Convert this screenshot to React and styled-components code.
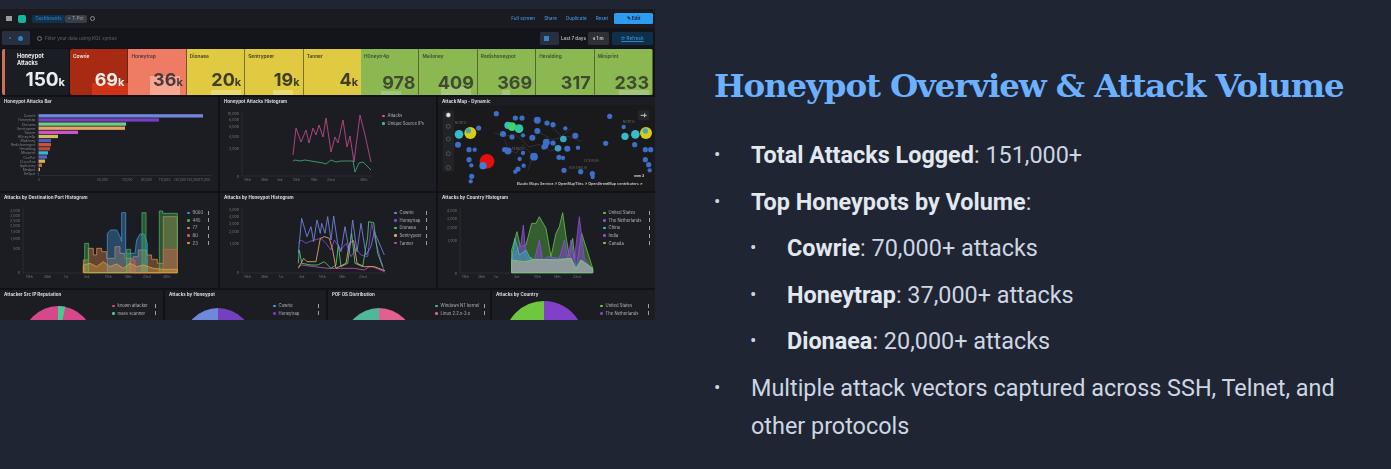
import React from 'react'
import styled, { createGlobalStyle } from 'styled-components'

const GlobalStyle = createGlobalStyle`
  html, body { margin: 0; padding: 0; background: #1f2532; }
  * { box-sizing: border-box; }
`

const arc = (cx, cy, r, a0, a1) => {
  const p = a => [cx + r * Math.sin(a * Math.PI / 180), cy - r * Math.cos(a * Math.PI / 180)]
  const [x0, y0] = p(a0)
  const [x1, y1] = p(a1)
  return `M${cx} ${cy}L${x0} ${y0}A${r} ${r} 0 ${a1 - a0 > 180 ? 1 : 0} 1 ${x1} ${y1}Z`
}
const pts = list => list.map(p => p.join(',')).join(' ')

const tiles = [
  { name: 'Cowrie', value: '69', unit: 'k', bg: '#a92a12', fg: '#f4ede8', hump: { left: 22, width: 36, height: 12, color: '#cf3515' } },
  { name: 'Honeytrap', value: '36', unit: 'k', bg: '#ee7b63', fg: '#4a3a36', hump: { left: 22, width: 30, height: 19, color: '#f6a794' } },
  { name: 'Dionaea', value: '20', unit: 'k', bg: '#e0ca42', fg: '#3f3d22', hump: { left: 24, width: 30, height: 5, color: '#e9da74' } },
  { name: 'Sentrypeer', value: '19', unit: 'k', bg: '#e0ca42', fg: '#3f3d22', hump: { left: 28, width: 20, height: 5, color: '#e9da74' } },
  { name: 'Tanner', value: '4', unit: 'k', bg: '#e0ca42', fg: '#3f3d22', noLine: true },
  { name: 'H0neytr4p', value: '978', bg: '#8cb851', fg: '#3f4a32', hump: { left: 20, width: 20, height: 4, color: '#a3c774' } },
  { name: 'Mailoney', value: '409', bg: '#8cb851', fg: '#3f4a32', hump: { left: 22, width: 30, height: 8, color: '#a3c774' } },
  { name: 'Redishoneypot', value: '369', bg: '#8cb851', fg: '#3f4a32', hump: { left: 24, width: 8, height: 5, color: '#a3c774' } },
  { name: 'Heralding', value: '317', bg: '#8cb851', fg: '#3f4a32' },
  { name: 'Miniprint', value: '233', bg: '#8cb851', fg: '#3f4a32', hump: { left: 24, width: 30, height: 5, color: '#a3c774' } },
]

const bars = [
  ['Cowrie', 203, '#7088dc'], ['Honeytrap', 159, '#7440c0'], ['Dionaea', 126, '#6fcc86'], ['Sentrypeer', 125, '#e0a76c'],
  ['Tanner', 78, '#cf55c4'], ['H0neytr4p', 58, '#d3bd5a'], ['Mailoney', 51, '#4a5cc4'], ['Redishoneypot', 51, '#c9553f'],
  ['Heralding', 50, '#b84a44'], ['Miniprint', 48, '#3fb5cc'], ['ConPot', 47, '#4d63d0'], ['CiscoAsa', 45, '#dcb545'],
  ['Ipphoney', 42, '#c0714d'], ['Medpot', 40, '#d3bd5a'], ['Hellpot', 39, '#3f55b0'],
]

const attackLine = [[292, 155], [295, 128], [300, 142], [305, 130], [308, 143], [312, 128], [315, 135], [318, 125], [322, 137], [325, 118], [328, 138], [330, 152], [334, 137], [337, 143], [342, 120], [346, 147], [349, 136], [353, 162], [359, 115], [364, 135], [370, 162]]
const sourceLine = [[292, 161], [294, 160], [299, 161], [304, 160], [310, 161], [316, 162], [322, 163], [325, 164], [330, 160], [335, 162], [340, 161], [348, 161], [352, 161], [354, 172], [358, 163], [362, 162], [370, 170]]

const cowrie = [[52, 160], [62, 55], [78, 110], [90, 80], [98, 125], [108, 60], [118, 100], [122, 70], [132, 100], [140, 50], [150, 120], [158, 48], [170, 130], [180, 155], [192, 80], [205, 155], [215, 60], [228, 155], [240, 70], [255, 165], [270, 140], [280, 95], [310, 165]]
const honeytrap = [[52, 130], [60, 120], [75, 130], [85, 125], [100, 120], [120, 115], [135, 130], [150, 150], [160, 120], [180, 150], [195, 130], [210, 170], [225, 145], [240, 165], [260, 170], [272, 70], [285, 130], [310, 215]]
const dionaea = [[52, 190], [55, 150], [62, 190], [90, 195], [110, 195], [130, 185], [150, 205], [165, 195], [172, 135], [180, 200], [200, 190], [212, 100], [222, 190], [245, 200], [260, 110], [263, 65], [278, 68], [290, 160], [305, 200]]
const sentrypeer = [[52, 205], [68, 175], [78, 185], [105, 185], [118, 115], [130, 110], [145, 115], [155, 150], [165, 205], [195, 190], [205, 130], [218, 122], [228, 190], [250, 200], [280, 200], [312, 212]]
const tanner = [[52, 200], [62, 195], [100, 200], [140, 205], [180, 205], [220, 205], [250, 210], [265, 200], [275, 200], [310, 215]]

const usArea = [[62, 150], [78, 95], [88, 140], [105, 135], [122, 70], [135, 70], [145, 50], [165, 85], [180, 170], [195, 100], [205, 80], [215, 38], [225, 110], [235, 170], [245, 115], [255, 210], [272, 100], [305, 205]]
const nlArea = [[62, 180], [90, 130], [97, 75], [105, 170], [130, 180], [145, 120], [155, 180], [170, 170], [205, 175], [220, 120], [230, 175], [240, 120], [250, 180], [265, 50], [280, 175], [305, 210]]
const cnArea = [[62, 180], [72, 115], [85, 165], [105, 150], [115, 170], [130, 180], [200, 178], [240, 175], [255, 205], [270, 180], [305, 208]]
const grayArea = [[62, 180], [100, 185], [130, 178], [200, 180], [240, 175], [255, 210], [270, 180], [305, 205]]

const portAreas = [
  ['#d8874a', [[40, 218], [40, 180], [55, 180], [55, 145], [70, 145], [70, 165], [80, 165], [80, 145], [95, 145], [95, 155], [110, 155], [110, 175], [135, 175], [135, 140], [150, 140], [150, 160], [165, 160], [165, 175], [190, 175], [190, 170], [205, 170], [205, 150], [230, 150], [230, 165], [245, 165], [245, 178], [262, 178], [262, 190], [280, 190], [280, 50], [322, 50], [322, 218]]],
  ['#3f8fd0', [[112, 218], [112, 100], [122, 90], [140, 90], [150, 110], [155, 125], [155, 38], [167, 38], [167, 160], [195, 160], [200, 120], [210, 102], [222, 102], [232, 130], [232, 218]]],
  ['#45b058', [[44, 218], [44, 130], [56, 130], [56, 218], [170, 218], [170, 148], [182, 148], [182, 218], [216, 218], [216, 38], [228, 38], [228, 218], [268, 218], [268, 33], [278, 33], [278, 40], [322, 40], [322, 218]]],
  ['#d05a50', [[180, 218], [180, 180], [195, 180], [195, 218], [280, 218], [280, 148], [322, 148], [322, 218]]],
  ['#e0a040', [[40, 218], [40, 195], [60, 190], [80, 200], [100, 185], [120, 200], [140, 192], [160, 205], [180, 190], [200, 200], [220, 195], [250, 205], [280, 208], [322, 208], [322, 218]]],
]

const mapDots = [
  [175, 42, 6], [232, 55, 6], [252, 55, 6], [298, 62, 8], [327, 70, 6], [345, 75, 6], [515, 50, 6], [122, 85, 6], [195, 103, 7], [222, 112, 6], [255, 107, 5],
  [298, 94, 7], [283, 114, 7], [345, 130, 6], [412, 108, 7], [382, 86, 5], [325, 128, 8], [322, 138, 7], [318, 142, 6], [388, 147, 7], [420, 144, 5], [503, 131, 6],
  [60, 135, 7], [93, 150, 6], [110, 150, 5], [200, 150, 6], [210, 154, 8], [255, 160, 5], [245, 178, 5], [288, 171, 9], [363, 173, 6], [375, 175, 5],
  [93, 180, 6], [100, 197, 5], [240, 208, 6], [232, 216, 5], [257, 198, 5], [378, 212, 6], [428, 216, 6], [463, 222, 6], [464, 232, 5], [101, 230, 6], [98, 245, 5],
  [622, 150, 6], [638, 150, 6], [622, 180, 6], [632, 195, 6], [635, 212, 5], [557, 82, 5], [590, 135, 6],
]
const mapBig = [
  [147, 185, 22, '#e4100f'], [135, 198, 11, '#3f7fd8'], [97, 100, 18, '#d8cc18'], [91, 93, 8, '#49a8b0'], [63, 104, 13, '#36bccb'],
  [210, 77, 11, '#36bccb'], [222, 81, 13, '#3dd468'], [243, 87, 13, '#2fc4a0'], [376, 118, 10, '#36a8c0'], [360, 146, 10, '#3f9cc8'],
  [561, 110, 11, '#36bccb'], [592, 104, 13, '#36bccb'], [624, 100, 18, '#d8cc18'], [622, 94, 8, '#49a8b0'],
]
const borders = 'M170 100l30 10 30-6 25 20 18 18 30-8 35 20 30-10M200 120l10 30 25 10 20-25M255 135l30 35-15 40M300 95l40 25 50-10 40 15M340 80l30 30 30-25'

const Page = styled.div`
  display: flex;
  width: 1391px;
  height: 469px;
  overflow: hidden;
  background: #1f2532;
`
const Dashboard = styled.div`
  flex: none;
  width: 655px;
  height: 311px;
  margin-top: 9px;
  display: flex;
  flex-direction: column;
  background: #111217;
  overflow: hidden;
  filter: blur(0.6px);
  font-family: Inter, "Liberation Sans", sans-serif;
`
const TopNav = styled.div`
  flex: none;
  height: 19px;
  display: flex;
  align-items: center;
  padding: 0 2px 0 6px;
  background: #191b21;
  font-size: 4.6px;
`
const MenuIcon = styled.span`
  width: 6px;
  height: 5px;
  background: #9a9ca3;
  margin-right: 6px;
`
const LogoTile = styled.span`
  width: 8px;
  height: 8px;
  border-radius: 2px;
  background: #13b7a0;
  margin-right: 6px;
`
const Crumb = styled.span`
  width: ${p => p.$width}px;
  height: 8px;
  line-height: 8px;
  text-align: center;
  color: ${p => p.$fg};
  background: ${p => p.$bg};
  border-radius: 2px;
`
const HistoryIcon = styled.span`
  width: 5px;
  height: 5px;
  margin-left: 3px;
  border: 1px solid #8a8c92;
  border-radius: 50%;
`
const NavLinks = styled.div`
  margin-left: auto;
  display: flex;
  align-items: center;
  gap: 9px;
  color: #3f90d8;
  font-weight: 500;
`
const EditButton = styled.span`
  width: 39px;
  height: 11px;
  margin-left: -3px;
  border-radius: 1.5px;
  background: #2d9bef;
  color: #10233a;
  font-weight: 700;
  display: flex;
  align-items: center;
  justify-content: center;
`
const FilterBar = styled.div`
  flex: none;
  height: 20px;
  display: flex;
  align-items: center;
  padding: 0 2px;
  background: #14151a;
  font-size: 4.6px;
`
const FilterToggle = styled.div`
  width: 28px;
  height: 14px;
  display: flex;
  align-items: center;
  justify-content: space-around;
  padding: 0 3px;
  border-radius: 1.5px;
  background: #27303e;
`
const Dot = styled.span`
  width: ${p => p.$size}px;
  height: ${p => p.$size}px;
  flex: none;
  border-radius: 50%;
  background: ${p => p.$color};
`
const SearchGlyph = styled.span`
  width: 5px;
  height: 5px;
  margin: 0 3px 0 7px;
  border: 1px solid #70747c;
  border-radius: 50%;
`
const Placeholder = styled.span`
  color: #5f636b;
`
const FilterRight = styled.div`
  margin-left: auto;
  display: flex;
  align-items: center;
  color: #b6b9bf;
  font-weight: 600;
`
const CalendarButton = styled.div`
  width: 19px;
  height: 13px;
  margin-right: 2px;
  padding-left: 4px;
  display: flex;
  align-items: center;
  border-radius: 1.5px;
  background: #27303e;
`
const CalendarGlyph = styled.span`
  width: 5px;
  height: 5px;
  background: #3a7fc8;
`
const RefreshEvery = styled.div`
  width: 21px;
  height: 13px;
  margin-left: 2px;
  display: flex;
  align-items: center;
  justify-content: center;
  border-radius: 1.5px;
  background: #2e3036;
  color: #d0d2d6;
`
const RefreshButton = styled.div`
  width: 41px;
  height: 13px;
  margin-left: 3px;
  display: flex;
  align-items: center;
  justify-content: center;
  border-radius: 1.5px;
  background: #10304a;
  color: #2f86c8;
  text-decoration: underline;
`
const MetricRow = styled.div`
  flex: none;
  height: 46px;
  margin: 1px 2px 2px;
  display: flex;
`
const TotalTile = styled.div`
  flex: none;
  width: 67px;
  margin-right: 1px;
  padding: 4px 4px 3px 4px;
  display: flex;
  flex-direction: column;
  justify-content: space-between;
  background: #1b1d24;
  border-left: 3px solid #d86a58;
  border-radius: 2px;
  color: #eceef2;
`
const TotalTitle = styled.div`
  padding-left: 8px;
  font-size: 5.6px;
  line-height: 6.5px;
  font-weight: 700;
`
const TileStrip = styled.div`
  flex: 1;
  display: flex;
  border-radius: 2px;
  overflow: hidden;
`
const Tile = styled.div`
  flex: 1;
  position: relative;
  display: flex;
  flex-direction: column;
  justify-content: space-between;
  padding: 4px 3px 3px 3px;
  background: ${p => p.$bg};
  color: ${p => p.$fg};
  border-right: ${p => (p.$noLine ? 'none' : '1px solid rgba(40,40,20,.55)')};
`
const Hump = styled.span`
  position: absolute;
  bottom: 0;
  left: ${p => p.$left}px;
  width: ${p => p.$width}px;
  height: ${p => p.$height}px;
  background: ${p => p.$color};
`
const TileName = styled.div`
  position: relative;
  font-size: 4.8px;
  font-weight: 600;
`
const TileValue = styled.div`
  position: relative;
  text-align: right;
  font-size: ${p => (p.$large ? 19 : 18)}px;
  line-height: 19px;
  font-weight: 700;
  white-space: nowrap;
  small {
    font-size: 11px;
  }
`
const PanelRow = styled.div`
  flex: none;
  height: ${p => p.$height}px;
  display: grid;
  grid-template-columns: ${p => p.$columns};
  gap: 2px;
  margin-bottom: 2px;
`
const LastRow = styled(PanelRow)`
  flex: 1;
  height: auto;
  margin-bottom: 0;
`
const Panel = styled.div`
  display: flex;
  flex-direction: column;
  min-width: 0;
  padding: 2px 0 0 4px;
  background: #1c1d23;
  overflow: hidden;
`
const PanelTitle = styled.div`
  flex: none;
  font-size: 4.5px;
  line-height: 6px;
  font-weight: 700;
  color: #dcdde0;
  white-space: nowrap;
`
const PanelBody = styled.div`
  flex: 1;
  min-height: 0;
  display: flex;
  align-items: flex-start;
`
const Chart = styled.svg`
  flex: none;
  display: block;
  margin-left: -4px;
`
const Legend = styled.ul`
  list-style: none;
  margin: ${p => p.$top}px 0 0 ${p => p.$left}px;
  padding: 0;
  width: ${p => p.$width}px;
  flex: none;
`
const LegendItem = styled.li`
  height: 7.6px;
  display: flex;
  align-items: center;
  gap: 3px;
  font-size: 4.2px;
  color: #b4b6bb;
  white-space: nowrap;
  span:nth-child(2) {
    flex: 1;
    min-width: 0;
  }
  b {
    width: 1px;
    height: 4px;
    background: #9b9da3;
  }
`
const BottomStrip = styled.div`
  flex: none;
  height: 2px;
  background: #1b2a33;
`
const Content = styled.div`
  flex: 1;
  min-width: 0;
  padding: 0 0 0 59px;
`
const Heading = styled.h1`
  margin: 64px 0 28px;
  font-family: "DejaVu Serif", "Liberation Serif", serif;
  font-weight: 700;
  font-size: 32.5px;
  line-height: 44px;
  letter-spacing: -1.15px;
  color: #6cb0ff;
  white-space: nowrap;
`
const Bullets = styled.ul`
  list-style: none;
  margin: 0;
  padding: 0;
`
const Bullet = styled.li`
  display: flex;
  margin-left: ${p => (p.$nested ? 36 : 0)}px;
  margin-bottom: 8.1px;
  width: ${p => (p.$nested ? 590 : 626)}px;
  font-family: Roboto, "Liberation Sans", sans-serif;
  font-size: 23.4px;
  line-height: 38.4px;
  color: #cdd6e2;
  &::before {
    content: "•";
    flex: none;
    width: 37px;
    font-size: 19px;
  }
  strong {
    font-weight: 700;
    color: #e2e8f0;
  }
`

const LegendList = ({ items, top, left, width, plain }) => (
  <Legend $top={top} $left={left} $width={width}>
    {items.map(([label, color]) => (
      <LegendItem key={label}>
        <Dot $size={2.6} $color={color} />
        <span>{label}</span>
        {!plain && <b />}
      </LegendItem>
    ))}
  </Legend>
)

const Axis = ({ x, y0, y1, x1, ticks, labels }) => (
  <g>
    <path d={`M${x} ${y0}V${y1}H${x1}`} stroke="#3a3c43" strokeWidth=".5" fill="none" />
    {ticks.map(([label, ty]) => (
      <text key={label} x={x - 3} y={ty} fontSize="3.6" fill="#777" textAnchor="end">{label}</text>
    ))}
    {labels.map(([label, lx]) => (
      <text key={label} x={lx} y={y1 + 4.5} fontSize="3.4" fill="#777">{label}</text>
    ))}
  </g>
)

export default function App() {
  return (
    <Page>
      <GlobalStyle />
      <Dashboard>
        <TopNav>
          <MenuIcon />
          <LogoTile />
          <Crumb $width={33} $fg="#2f86c8" $bg="#11324a">Dashboards</Crumb>
          <Crumb $width={22} $fg="#9a9ca3" $bg="#3a3d45">• T-Pot</Crumb>
          <HistoryIcon />
          <NavLinks>
            <span>Full screen</span>
            <span>Share</span>
            <span>Duplicate</span>
            <span>Reset</span>
            <EditButton>✎ Edit</EditButton>
          </NavLinks>
        </TopNav>
        <FilterBar>
          <FilterToggle>
            <Dot $size={2} $color="#3a6fa8" />
            <Dot $size={5} $color="#2f80d0" />
          </FilterToggle>
          <SearchGlyph />
          <Placeholder>Filter your data using KQL syntax</Placeholder>
          <FilterRight>
            <CalendarButton><CalendarGlyph /></CalendarButton>
            <span>Last 7 days</span>
            <RefreshEvery>⏸ 1 m</RefreshEvery>
            <RefreshButton>⟳ Refresh</RefreshButton>
          </FilterRight>
        </FilterBar>
        <MetricRow>
          <TotalTile>
            <TotalTitle>Honeypot<br />Attacks</TotalTitle>
            <TileValue $large>150<small>k</small></TileValue>
          </TotalTile>
          <TileStrip>
            {tiles.map(t => (
              <Tile key={t.name} $bg={t.bg} $fg={t.fg} $noLine={t.noLine}>
                {t.hump && <Hump $left={t.hump.left} $width={t.hump.width} $height={t.hump.height} $color={t.hump.color} />}
                <TileName>{t.name}</TileName>
                <TileValue>{t.value}{t.unit && <small>{t.unit}</small>}</TileValue>
              </Tile>
            ))}
          </TileStrip>
        </MetricRow>

        <PanelRow $height={94} $columns="218px 216px 1fr">
          <Panel>
            <PanelTitle>Honeypot Attacks Bar</PanelTitle>
            <PanelBody>
              <Chart width="218" height="86" viewBox="0 105 218 86">
                {bars.map(([label, x1, color], i) => (
                  <g key={label}>
                    <text x="35.5" y={117.3 + i * 4.12} fontSize="3.5" fill="#80828a" textAnchor="end">{label}</text>
                    <rect x="38.5" y={114.2 + i * 4.12} width={x1 - 38.5} height="3.3" fill={color} />
                  </g>
                ))}
                <path d="M38 113V175.5H212" stroke="#3a3c43" strokeWidth=".5" fill="none" />
                {[['0', 38], ['50,000', 97], ['70,000', 122], ['90,000', 141], ['110,000', 159], ['130,000', 174], ['150,000', 187], ['171,000', 199]].map(([label, x]) => (
                  <text key={x} x={x} y="181" fontSize="3.2" fill="#6c6e75">{label}</text>
                ))}
              </Chart>
            </PanelBody>
          </Panel>
          <Panel>
            <PanelTitle>Honeypot Attacks Histogram</PanelTitle>
            <PanelBody>
              <Chart width="150" height="86" viewBox="219 105 150 86" style={{ overflow: 'visible' }}>
                <Axis x={241} y0={112} y1={176} x1={372}
                  ticks={[['10,000', 115], ['8,000', 121], ['6,000', 128], ['4,000', 138], ['2,000', 150], ['0', 178]]}
                  labels={[['19th', 243], ['26th', 260], ['3rd', 276], ['10th', 292], ['16th', 310], ['23rd', 326], ['30th', 359]]} />
                <polyline points={pts(attackLine)} fill="none" stroke="#b84a86" strokeWidth=".9" />
                <polyline points={pts(sourceLine)} fill="none" stroke="#3fb47c" strokeWidth=".8" />
              </Chart>
              <LegendList plain top={7} left={12} width={52} items={[['Attacks', '#d05a96'], ['Unique Source IPs', '#45c08a']]} />
            </PanelBody>
          </Panel>
          <Panel>
            <PanelTitle>Attack Map - Dynamic</PanelTitle>
            <PanelBody>
              <Chart width="218" height="86" viewBox="0 16 654 258">
                <rect x="0" y="16" width="654" height="258" fill="#1a1a1c" />
                <path d={borders} stroke="#45464a" strokeWidth="1.5" fill="none" />
                {mapDots.map(([x, y, r]) => <circle key={`${x}-${y}`} cx={x} cy={y} r={r * 1.3} fill="#3d6fca" />)}
                {mapBig.map(([x, y, r, c]) => <circle key={`${x}-${y}`} cx={x} cy={y} r={r} fill={c} />)}
                <rect x="14" y="32" width="34" height="184" rx="5" fill="#222327" />
                {[46, 80, 118, 162, 204].map(y => (
                  <circle key={y} cx="31" cy={y} r={y === 46 ? 7 : 6} fill={y === 46 ? '#e8e8e8' : 'none'} stroke="#66686c" strokeWidth="2" />
                ))}
                <rect x="600" y="32" width="34" height="30" rx="5" fill="#25262b" />
                <path d="M608 47h18M620 41v12" stroke="#c8c8c8" strokeWidth="3" />
                <text x="50" y="72" fontSize="10" fill="#666">NORTH</text>
                <text x="554" y="70" fontSize="10" fill="#666">NORTH</text>
                <text x="220" y="150" fontSize="11" fill="#666">AFRICA</text>
                <text x="392" y="207" fontSize="10" fill="#666">AUSTRALIA</text>
                <text x="438" y="186" fontSize="10" fill="#666">OCEANIA</text>
                <text x="588" y="232" fontSize="10" fill="#ddd" fontWeight="700">oom 3</text>
                <text x="236" y="255" fontSize="11" fill="#c8c8cc" fontWeight="600">Elastic Maps Service  ↗  OpenMapTiles  ↗  OpenStreetMap contributors ↗</text>
              </Chart>
            </PanelBody>
          </Panel>
        </PanelRow>

        <PanelRow $height={95} $columns="218px 216px 1fr">
          <Panel>
            <PanelTitle>Attacks by Destination Port Histogram</PanelTitle>
            <PanelBody>
              <Chart width="183" height="87" viewBox="0 201 183 87">
                <Axis x={23} y0={207} y1={273} x1={178}
                  ticks={[['3,500', 212], ['3,000', 217], ['2,500', 222], ['2,000', 227], ['1,500', 233], ['1,000', 240], ['500', 250], ['0', 274]]}
                  labels={[['19th', 26], ['26th', 44], ['1st', 64], ['3rd', 84], ['10th', 105], ['16th', 125], ['23rd', 143], ['30th', 163]]} />
                <g transform="translate(70 200) scale(.3333)">
                  {portAreas.map(([color, area]) => (
                    <polygon key={color} points={pts(area)} fill={color} fillOpacity=".38" stroke={color} strokeWidth="2.4" />
                  ))}
                </g>
              </Chart>
              <LegendList top={8} left={4} width={22} items={[['9000', '#3f8fd0'], ['445', '#45b058'], ['77', '#d8874a'], ['80', '#d05a50'], ['23', '#e0a040']]} />
            </PanelBody>
          </Panel>
          <Panel>
            <PanelTitle>Attacks by Honeypot Histogram</PanelTitle>
            <PanelBody>
              <Chart width="170" height="87" viewBox="219 201 170 87">
                <Axis x={241} y0={207} y1={273} x1={385}
                  ticks={[['5,000', 211], ['4,000', 218], ['3,000', 225], ['2,000', 233], ['1,000', 245], ['0', 274]]}
                  labels={[['19th', 243], ['26th', 260], ['1st', 278], ['3rd', 298], ['10th', 318], ['16th', 338], ['23rd', 358]]} />
                <g transform="translate(280 200) scale(.3333)" fill="none" strokeWidth="2.6">
                  <polyline points={pts(tanner)} stroke="#b650b0" />
                  <polyline points={pts(honeytrap)} stroke="#7a50c8" />
                  <polyline points={pts(dionaea)} stroke="#55c870" />
                  <polyline points={pts(sentrypeer)} stroke="#e0a86a" />
                  <polyline points={pts(cowrie)} stroke="#7088dc" />
                </g>
              </Chart>
              <LegendList top={8} left={4} width={33} items={[['Cowrie', '#7088dc'], ['Honeytrap', '#7a50c8'], ['Dionaea', '#55c870'], ['Sentrypeer', '#e0a86a'], ['Tanner', '#b650b0']]} />
            </PanelBody>
          </Panel>
          <Panel>
            <PanelTitle>Attacks by Country Histogram</PanelTitle>
            <PanelBody>
              <Chart width="163" height="87" viewBox="437 201 163 87">
                <Axis x={459} y0={207} y1={273} x1={593}
                  ticks={[['4,000', 212], ['3,000', 220], ['2,000', 229], ['1,000', 242], ['0', 275]]}
                  labels={[['19th', 461], ['26th', 477], ['1st', 493], ['3rd', 513], ['10th', 533], ['16th', 553], ['23rd', 572]]} />
                <g transform="translate(490 200) scale(.3333)" strokeWidth="2.4">
                  <polygon points={pts([...usArea, [305, 218], [62, 218]])} fill="#3f7a35" fillOpacity=".7" stroke="#6dc050" />
                  <polygon points={pts([...nlArea, [305, 218], [62, 218]])} fill="#7a45c0" fillOpacity=".65" stroke="#8a50d0" />
                  <polygon points={pts([...cnArea, [305, 218], [62, 218]])} fill="#38a8b0" fillOpacity=".55" stroke="#40c0c8" />
                  <polygon points={pts([...grayArea, [305, 218], [62, 218]])} fill="#9a9e9a" fillOpacity=".85" stroke="#78d060" />
                </g>
              </Chart>
              <LegendList top={8} left={2} width={47} items={[['United States', '#6dc050'], ['The Netherlands', '#8a50d0'], ['China', '#40c0c8'], ['India', '#9050c8'], ['Canada', '#a0c840']]} />
            </PanelBody>
          </Panel>
        </PanelRow>

        <LastRow $columns="163px 161px 162px 1fr">
          <Panel>
            <PanelTitle>Attacker Src IP Reputation</PanelTitle>
            <PanelBody>
              <Chart width="109" height="22" viewBox="0 298 109 22">
                <path d={arc(58, 341, 35, -180, 0)} fill="#d6488a" />
                <path d={arc(58, 341, 35, 0, 180)} fill="#d6488a" />
                <path d={arc(58, 341, 35, 0, 12)} fill="#45cc90" />
              </Chart>
              <LegendList top={4} left={3} width={44} items={[['known attacker', '#d6488a'], ['mass scanner', '#45cc90']]} />
            </PanelBody>
          </Panel>
          <Panel>
            <PanelTitle>Attacks by Honeypot</PanelTitle>
            <PanelBody>
              <Chart width="105" height="22" viewBox="165 298 105 22">
                <path d={arc(218, 343, 35, -180, 0)} fill="#7088dc" />
                <path d={arc(218, 343, 35, 0, 180)} fill="#7440c0" />
              </Chart>
              <LegendList top={4} left={3} width={46} items={[['Cowrie', '#7088dc'], ['Honeytrap', '#7440c0']]} />
            </PanelBody>
          </Panel>
          <Panel>
            <PanelTitle>P0F OS Distribution</PanelTitle>
            <PanelBody>
              <Chart width="104" height="22" viewBox="327 298 104 22">
                <path d={arc(378, 343, 35, -180, 0)} fill="#50b89a" />
                <path d={arc(378, 343, 35, 0, 180)} fill="#e0608f" />
              </Chart>
              <LegendList top={4} left={3} width={50} items={[['Windows NT kernel', '#50b89a'], ['Linux 2.2.x-3.x', '#e0608f']]} />
            </PanelBody>
          </Panel>
          <Panel>
            <PanelTitle>Attacks by Country</PanelTitle>
            <PanelBody>
              <Chart width="105" height="22" viewBox="491 298 105 22">
                <path d={arc(543, 341, 40, -180, 0)} fill="#6fc63f" />
                <path d={arc(543, 341, 40, 0, 58)} fill="#8040c8" />
                <path d={arc(543, 341, 40, 58, 90)} fill="#35b8b8" />
              </Chart>
              <LegendList top={4} left={3} width={49} items={[['United States', '#6fc63f'], ['The Netherlands', '#8040c8']]} />
            </PanelBody>
          </Panel>
        </LastRow>
        <BottomStrip />
      </Dashboard>

      <Content>
        <Heading>Honeypot Overview &amp; Attack Volume</Heading>
        <Bullets>
          <Bullet><span><strong>Total Attacks Logged</strong>: 151,000+</span></Bullet>
          <Bullet><span><strong>Top Honeypots by Volume</strong>:</span></Bullet>
          <Bullet $nested><span><strong>Cowrie</strong>: 70,000+ attacks</span></Bullet>
          <Bullet $nested><span><strong>Honeytrap</strong>: 37,000+ attacks</span></Bullet>
          <Bullet $nested><span><strong>Dionaea</strong>: 20,000+ attacks</span></Bullet>
          <Bullet><span>Multiple attack vectors captured across SSH, Telnet, and other protocols</span></Bullet>
        </Bullets>
      </Content>
    </Page>
  )
}
